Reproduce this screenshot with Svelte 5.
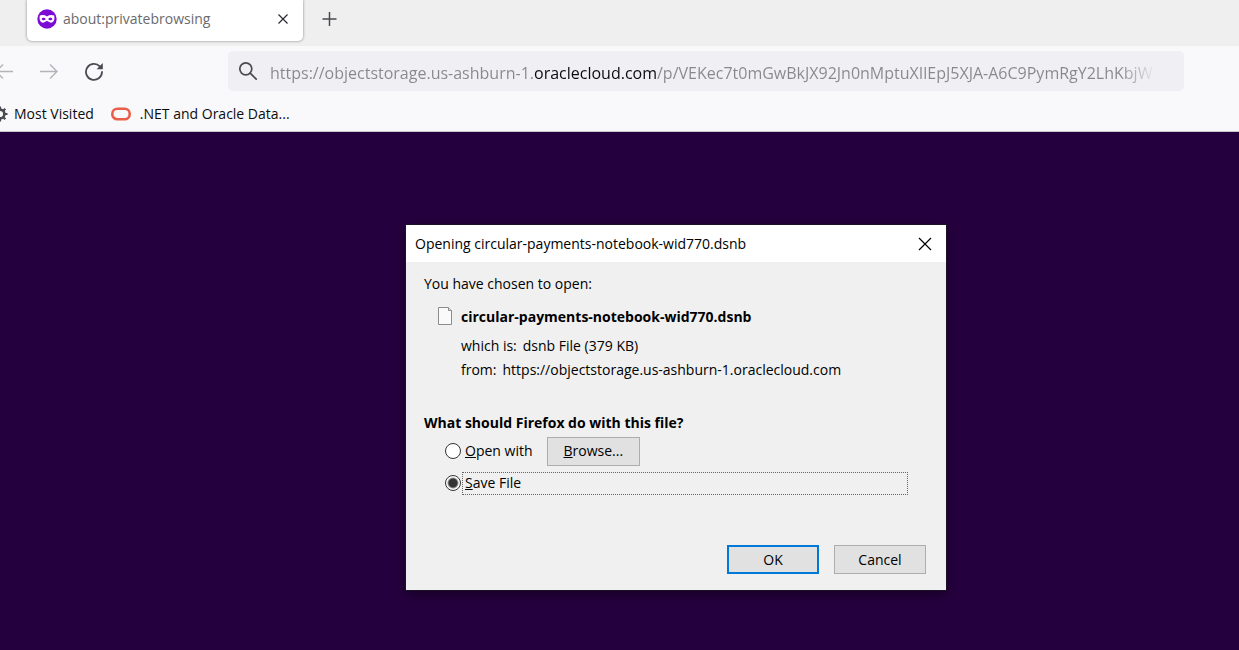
<script>
  let url = $state(
    'https://objectstorage.us-ashburn-1.oraclecloud.com/p/VEKec7t0mGwBkJX92Jn0nMptuXIlEpJ5XJA-A6C9PymRgY2LhKbjW'
  );
  let action = $state('save');
</script>

<div class="browser">
  <header>
    <div class="tabs">
      <div class="tab">
        <svg width="20" height="20" viewBox="0 0 20 20" aria-hidden="true">
          <circle cx="10" cy="10" r="9.7" fill="#7d0bd6" />
          <path
            fill="#fff"
            d="M2.800 6.600c2.300-.9 5-.6 7.200.8 2.200-1.400 4.900-1.700 7.200-.8.7 4-.3 7-3.300 7.100-1.800 0-2.700-1.600-3.900-1.600s-2.100 1.600-3.900 1.600c-3-.1-4-3.100-3.300-7.100z"
          />
          <path
            fill="#7d0bd6"
            d="M4.500 10c.9-1.700 3.200-1.800 4.300 0-1.100 1.700-3.400 1.700-4.300 0zM11.200 10c1.100-1.800 3.400-1.700 4.300 0-.9 1.700-3.200 1.700-4.300 0z"
          />
        </svg>
        <span class="tab-title">about:privatebrowsing</span>
        <button class="icon-button" aria-label="Close tab">
          <svg width="12" height="12" viewBox="0 0 12 12">
            <path d="M1.500 1.500l9 9M10.500 1.500l-9 9" stroke="#2b2a33" stroke-width="1.200" />
          </svg>
        </button>
      </div>
      <button class="icon-button" aria-label="New tab">
        <svg width="16" height="16" viewBox="0 0 16 16">
          <path d="M8.500 1v14M1.500 8h14" stroke="#4a4a53" stroke-width="1.500" />
        </svg>
      </button>
    </div>

    <nav>
      <button class="icon-button" aria-label="Back" disabled>
        <svg width="20" height="20" viewBox="0 0 20 20">
          <path d="M19 10.500H2M9 3.500l-7 7 7 7" fill="none" stroke="#b4b4b8" stroke-width="1.400" />
        </svg>
      </button>
      <button class="icon-button" aria-label="Forward" disabled>
        <svg width="20" height="20" viewBox="0 0 20 20">
          <path d="M1 10.500h17M11 3.500l7 7-7 7" fill="none" stroke="#b4b4b8" stroke-width="1.400" />
        </svg>
      </button>
      <button class="icon-button" aria-label="Reload">
        <svg width="20" height="20" viewBox="0 0 20 20">
          <path
            d="M15.800 5.400A8 8 0 1 0 18 11"
            fill="none"
            stroke="#4a4a53"
            stroke-width="1.800"
            stroke-linecap="round"
          />
          <path d="M18.800 2v6.200h-6.200z" fill="#4a4a53" />
        </svg>
      </button>
      <div class="address">
        <svg width="20" height="20" viewBox="0 0 20 20" aria-hidden="true">
          <circle cx="7.800" cy="7.800" r="6" fill="none" stroke="#4a4a53" stroke-width="1.700" />
          <path d="M12.200 12.200l6 6" stroke="#4a4a53" stroke-width="1.700" stroke-linecap="round" />
        </svg>
        <input type="text" aria-label="Address" spellcheck="false" bind:value={url} />
      </div>
    </nav>

    <div class="bookmarks">
      <a href="#most-visited">
        <svg width="16" height="16" viewBox="0 0 16 16" aria-hidden="true">
          <circle cx="8" cy="8" r="4.400" fill="none" stroke="#4a4a53" stroke-width="2.600" />
          <path
            d="M8 .5v3M8 12.500v3M.5 8h3M12.500 8h3M2.700 2.700l2 2M11.300 11.300l2 2M2.700 13.300l2-2M11.300 4.700l2-2"
            stroke="#4a4a53"
            stroke-width="2.200"
          />
        </svg>
        Most Visited
      </a>
      <a href="#dotnet" class="oracle">
        <svg width="20" height="14" viewBox="0 0 20 14" aria-hidden="true">
          <rect x="1.300" y="1.800" width="17.400" height="10.400" rx="5" fill="none" stroke="#e8604c" stroke-width="2.600" />
        </svg>
        .NET and Oracle Data...
      </a>
    </div>
  </header>

  <main>
    <div class="dialog" role="dialog" aria-labelledby="dialog-title">
      <div class="titlebar">
        <span id="dialog-title">Opening circular-payments-notebook-wid770.dsnb</span>
        <button class="icon-button" aria-label="Close">
          <svg width="14" height="14" viewBox="0 0 14 14">
            <path d="M1 1l12 12M13 1L1 13" stroke="#000" stroke-width="1.200" />
          </svg>
        </button>
      </div>
      <form onsubmit={(e) => e.preventDefault()}>
        <p>You have chosen to open:</p>
        <div class="file">
          <svg width="16" height="20" viewBox="0 0 16 20" aria-hidden="true">
            <path d="M1.500 1.500h10l3 3v14h-13z" fill="#fafafa" stroke="#8c8c8c" />
            <path d="M11.500 1.500v3h3" fill="#ddd" stroke="#8c8c8c" />
          </svg>
          <div class="details">
            <strong>circular-payments-notebook-wid770.dsnb</strong>
            <div class="detail"><span>which is:</span><span>dsnb File (379 KB)</span></div>
            <div class="detail"><span>from:</span><span>https://objectstorage.us-ashburn-1.oraclecloud.com</span></div>
          </div>
        </div>
        <fieldset>
          <legend>What should Firefox do with this file?</legend>
          <div class="choice">
            <input type="radio" id="open" value="open" bind:group={action} />
            <label for="open"><u>O</u>pen with</label>
            <button type="button" class="push"><span><u>B</u>rowse...</span></button>
          </div>
          <div class="choice">
            <input type="radio" id="save" value="save" bind:group={action} />
            <label for="save" class="focused"><u>S</u>ave File</label>
          </div>
        </fieldset>
        <div class="actions">
          <button type="submit" class="push default">OK</button>
          <button type="button" class="push">Cancel</button>
        </div>
      </form>
    </div>
  </main>
</div>

<style>
  :global(body) {
    margin: 0;
  }
  .browser {
    display: flex;
    flex-direction: column;
    min-height: 100vh;
    overflow: hidden;
    color: #000;
    font-family: 'Segoe UI', 'Open Sans', 'Noto Sans', sans-serif;
    font-size: 14px;
    line-height: 20px;
  }
  .browser * {
    box-sizing: border-box;
  }
  svg {
    display: block;
    flex: none;
  }
  button,
  input {
    color: inherit;
    font: inherit;
  }
  .icon-button {
    display: flex;
    padding: 0;
    border: 0;
    background: none;
  }
  header {
    background: #f9f9fb;
    border-bottom: 1px solid #c8c6cc;
  }
  .tabs {
    display: flex;
    gap: 18px;
    height: 46px;
    padding-left: 27px;
    background: #efefef;
  }
  .tabs > .icon-button {
    align-self: flex-start;
    padding-top: 11px;
  }
  .tab {
    display: flex;
    align-items: center;
    width: 276px;
    height: 41px;
    padding: 0 14px 3px 10px;
    border-radius: 0 0 5px 5px;
    background: #fff;
    box-shadow: 0 0 3px rgba(0, 0, 0, 0.45);
  }
  .tab-title {
    flex: 1;
    margin-left: 6px;
    color: #6a6a6e;
  }
  nav {
    display: flex;
    align-items: center;
    gap: 25px;
    height: 50px;
    padding-right: 55px;
    margin-left: -6px;
  }
  .address {
    display: flex;
    flex: 1;
    align-items: center;
    gap: 12px;
    min-width: 0;
    height: 40px;
    margin-left: 99px;
    padding-left: 10px;
    border-radius: 5px;
    background: #f0eff4;
  }
  .address input {
    --muted: #88878c;
    flex: 1;
    min-width: 0;
    height: 40px;
    padding: 4px 0 0;
    border: 0;
    outline: 0;
    background: linear-gradient(
      90deg,
      var(--muted) 264px,
      #0c0c0d 264px 387px,
      var(--muted) 387px calc(100% - 64px),
      transparent calc(100% - 28px)
    );
    background-clip: text;
    color: transparent;
    font-size: 16px;
  }
  .bookmarks {
    display: flex;
    gap: 17px;
    height: 35px;
    margin-left: -8px;
  }
  .bookmarks a {
    display: flex;
    align-items: center;
    gap: 6px;
    color: #0c0c0d;
    text-decoration: none;
  }
  .bookmarks .oracle {
    gap: 9px;
  }
  main {
    position: relative;
    flex: 1;
    background: #25003e;
  }
  .dialog {
    position: absolute;
    top: 93px;
    left: 406px;
    width: 540px;
    background: #f0f0f0;
    box-shadow:
      0 0 0 1px #1d1128,
      0 4px 12px rgba(0, 0, 0, 0.45);
  }
  .titlebar {
    display: flex;
    align-items: center;
    justify-content: space-between;
    height: 37px;
    padding: 0 14px 0 9px;
    background: #fff;
  }
  form {
    padding: 12px 20px 16px 18px;
  }
  p {
    margin: 0;
  }
  .file {
    display: flex;
    gap: 8px;
    margin: 12px 0 33px 13px;
  }
  .details {
    display: flex;
    flex-direction: column;
    gap: 4px;
  }
  .details strong {
    margin-bottom: 4px;
    line-height: 22px;
  }
  .detail {
    display: flex;
    gap: 6px;
  }
  fieldset {
    min-width: 0;
    margin: 0;
    padding: 0;
    border: 0;
  }
  legend {
    padding: 0 0 2px;
    font-weight: 700;
  }
  .choice {
    display: flex;
    align-items: center;
    height: 32px;
    padding: 0 18px 0 21px;
  }
  .choice input {
    appearance: none;
    width: 16px;
    height: 16px;
    margin: 0 1px 0 0;
    border: 1px solid #333;
    border-radius: 50%;
    background: #fff;
  }
  .choice input:checked {
    background: radial-gradient(circle, #333 4px, #fff 6px);
  }
  .choice label {
    padding: 0 2px;
    border: 1px solid transparent;
  }
  .choice label.focused {
    flex: 1;
    padding-bottom: 1px;
    border: 1px dotted #666;
  }
  .choice .push {
    margin-left: 11px;
  }
  .push {
    min-width: 92px;
    height: 29px;
    padding: 0 16px;
    border: 1px solid #adadad;
    background: #e1e1e1;
  }
  .push.default {
    border: 2px solid #0078d7;
  }
  .actions {
    display: flex;
    justify-content: flex-end;
    gap: 15px;
    margin-top: 46px;
  }
</style>
